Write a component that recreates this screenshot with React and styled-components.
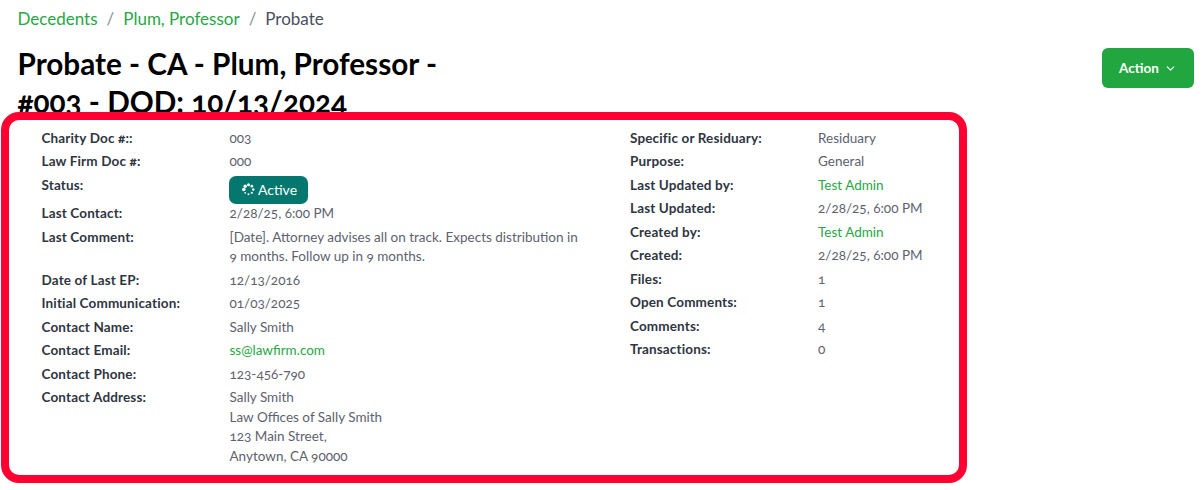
import { createGlobalStyle, styled } from "styled-components";
import { ChevronDown } from "lucide-react";

const GlobalStyle = createGlobalStyle`
  html, body {
    margin: 0;
    background: #fff;
    font-family: "Lato", "Open Sans", sans-serif;
    font-variant-numeric: oldstyle-nums;
    overflow: hidden;
  }
`;

const Page = styled.div`
  padding: 9px 9px 0 1px;
`;

const Breadcrumb = styled.nav`
  display: flex;
  align-items: center;
  margin-left: 16.5px;
  font-size: 17px;
  line-height: 20px;
  color: #4a4f5c;
`;

const Crumb = styled.a`
  color: #28a745;
`;

const Slash = styled.span`
  margin: 0 9px;
  color: #8a909a;
`;

const Header = styled.header`
  display: flex;
  justify-content: space-between;
  align-items: flex-start;
  height: 83px;
  margin-left: 16.5px;
`;

const Title = styled.h1`
  width: 450px;
  margin: 16px 0 0;
  font-size: 29.7px;
  line-height: 38px;
  font-weight: 700;
  color: #000;
`;

const ActionButton = styled.button`
  display: flex;
  align-items: center;
  justify-content: center;
  gap: 5px;
  width: 92px;
  height: 40px;
  margin-top: 19px;
  border: 0;
  border-radius: 6px;
  background: #22a63f;
  color: #fff;
  font-family: inherit;
  font-size: 13.5px;
  font-weight: 700;
`;

const Card = styled.section`
  display: grid;
  grid-template-columns: 588.5px 1fr;
  box-sizing: border-box;
  position: relative;
  width: 966px;
  height: 371px;
  padding: 8.5px 0 0 32.5px;
  border: 8px solid #ff0033;
  border-radius: 18px;
  background: #fff;
`;

const Details = styled.dl`
  display: grid;
  grid-template-columns: 188px 1fr;
  grid-auto-rows: min-content;
  row-gap: 4px;
  margin: 0;
  font-size: 13.5px;
  line-height: 19.5px;
`;

const Label = styled.dt`
  font-weight: 700;
  letter-spacing: 0.15px;
  color: #2f3542;
`;

const Value = styled.dd`
  max-width: 350px;
  margin: 0;
  color: #5d626e;
`;

const ValueLink = styled.a`
  color: #28a745;
`;

const Badge = styled.span`
  display: flex;
  align-items: center;
  gap: 3px;
  box-sizing: border-box;
  width: 79px;
  height: 28px;
  margin: 0 0 -3.5px -0.5px;
  padding: 0 0 0 13px;
  border-radius: 7px;
  background: #04786e;
  color: #fff;
  font-size: 14px;
`;

const SpinnerDots = () => {
  const sizes = [1.8, 1.7, 1.5, 1.35, 1.2, 1.1, 1, 0.9];
  return (
    <svg width="13" height="13" viewBox="0 0 13 13" fill="#fff">
      {sizes.map((r, i) => {
        const a = (i * Math.PI) / 4 + Math.PI;
        return <circle key={i} cx={6.5 + 4.7 * Math.cos(a)} cy={6.5 + 4.7 * Math.sin(a)} r={r} />;
      })}
    </svg>
  );
};

const leftRows = [
  ["Charity Doc #::", "003"],
  ["Law Firm Doc #:", "000"],
  ["Status:", <Badge><SpinnerDots />Active</Badge>],
  ["Last Contact:", "2/28/25, 6:00 PM"],
  ["Last Comment:", "[Date]. Attorney advises all on track. Expects distribution in 9 months. Follow up in 9 months."],
  ["Date of Last EP:", "12/13/2016"],
  ["Initial Communication:", "01/03/2025"],
  ["Contact Name:", "Sally Smith"],
  ["Contact Email:", <ValueLink>ss@lawfirm.com</ValueLink>],
  ["Contact Phone:", "123-456-790"],
  ["Contact Address:", <>Sally Smith<br />Law Offices of Sally Smith<br />123 Main Street,<br />Anytown, CA 90000</>],
];

const rightRows = [
  ["Specific or Residuary:", "Residuary"],
  ["Purpose:", "General"],
  ["Last Updated by:", <ValueLink>Test Admin</ValueLink>],
  ["Last Updated:", "2/28/25, 6:00 PM"],
  ["Created by:", <ValueLink>Test Admin</ValueLink>],
  ["Created:", "2/28/25, 6:00 PM"],
  ["Files:", "1"],
  ["Open Comments:", "1"],
  ["Comments:", "4"],
  ["Transactions:", "0"],
];

function DetailList({ rows }) {
  return (
    <Details>
      {rows.flatMap(([label, value]) => [
        <Label key={label}>{label}</Label>,
        <Value key={`${label}-value`}>{value}</Value>,
      ])}
    </Details>
  );
}

export default function App() {
  return (
    <Page>
      <GlobalStyle />
      <Breadcrumb>
        <Crumb>Decedents</Crumb>
        <Slash>/</Slash>
        <Crumb>Plum, Professor</Crumb>
        <Slash>/</Slash>
        <span>Probate</span>
      </Breadcrumb>
      <Header>
        <Title>Probate - CA - Plum, Professor - #003 - DOD: 10/13/2024</Title>
        <ActionButton>
          Action
          <ChevronDown size={13} />
        </ActionButton>
      </Header>
      <Card>
        <DetailList rows={leftRows} />
        <DetailList rows={rightRows} />
      </Card>
    </Page>
  );
}
